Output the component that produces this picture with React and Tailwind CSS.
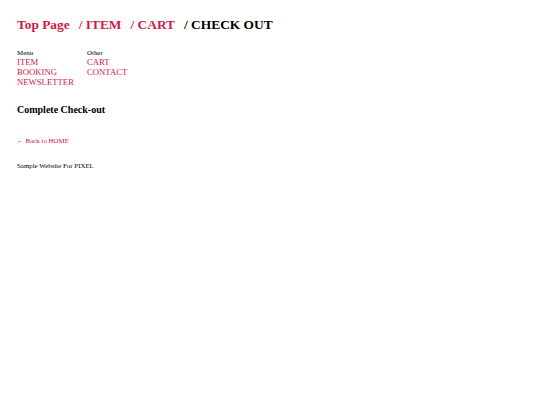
const crumbs = [
    { label: "Top Page", link: true },
    { label: "/ ITEM", link: true },
    { label: "/ CART", link: true },
    { label: "/ CHECK OUT", link: false },
];

const menus = [
    { title: "Menu", items: ["ITEM", "BOOKING", "NEWSLETTER"] },
    { title: "Other", items: ["CART", "CONTACT"] },
];

const App = () => {

    return (

        <div className="min-h-[405px] bg-white pl-[17px] pt-[18px] text-black [font-family:'Liberation_Serif','Times_New_Roman',serif]">

            <h1 className="flex gap-[9px] text-[13.4px] font-bold leading-[13px]">
                {crumbs.map((c) => (
                    <span
                        key={c.label}
                        className={c.link ? "text-[#d01846]" : "text-black"}
                    >
                        {c.label}
                    </span>
                ))}
            </h1>

            <div className="mt-[17.7px] flex">

                {menus.map((m) => (

                    <div key={m.title} className="w-[70px]">

                        <p className="text-[6.9px] leading-[8px]">{m.title}</p>

                        <ul>
                            {m.items.map((item) => (
                                <li
                                    key={item}
                                    className="text-[8.7px] leading-[10px] text-[#d01846]"
                                >
                                    {item}
                                </li>
                            ))}
                        </ul>

                    </div>

                ))}

            </div>

            <h2 className="mt-[18.3px] text-[10px] font-bold leading-[10px]">
                Complete Check-out
            </h2>

            <p className="mt-[22.4px] text-[6.9px] leading-[8px] text-[#d01846]">
                ← Back to HOME
            </p>

            <p className="mt-[17px] text-[6.9px] leading-[8px]">
                Sample Website For PIXEL
            </p>

        </div>

    );

};

export default App;
